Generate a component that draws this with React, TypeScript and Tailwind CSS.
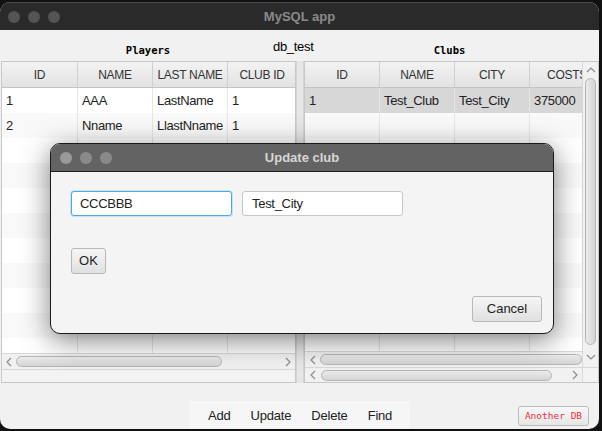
import React from "react";

type Col = { label: string; w: string };

const leftCols: Col[] = [
  { label: "ID", w: "w-[76px]" },
  { label: "NAME", w: "w-[75px]" },
  { label: "LAST NAME", w: "w-[75px]" },
  { label: "CLUB ID", w: "w-[69px]" },
];

const rightCols: Col[] = [
  { label: "ID", w: "w-[75px]" },
  { label: "NAME", w: "w-[75px]" },
  { label: "CITY", w: "w-[75px]" },
  { label: "COSTS", w: "w-[75px]" },
];

const players = [
  ["1", "AAA", "LastName", "1"],
  ["2", "Nname", "LlastNname", "1"],
];

const clubs = [["1", "Test_Club", "Test_City", "375000"]];

function Chevron({ dir }: { dir: "left" | "right" | "up" | "down" }) {
  const d =
    dir === "left"
      ? "M6 1 L2 5 L6 9"
      : dir === "right"
      ? "M2 1 L6 5 L2 9"
      : dir === "up"
      ? "M1 6 L5 2 L9 6"
      : "M1 3 L5 7 L9 3";
  const box = dir === "left" || dir === "right" ? "0 0 8 10" : "0 0 10 8";
  return (
    <svg
      viewBox={box}
      className={dir === "left" || dir === "right" ? "w-[8px] h-[10px]" : "w-[10px] h-[8px]"}
    >
      <path d={d} fill="none" stroke="#8c8c8c" strokeWidth="1.2" />
    </svg>
  );
}

function Thumb({ w }: { w: string }) {
  return (
    <div
      className={`${w} h-[11px] rounded-full border border-[#b4b4b4] bg-gradient-to-b from-[#ececec] to-[#d4d4d4]`}
    />
  );
}

function Table({
  cols,
  rows,
  selected,
}: {
  cols: Col[];
  rows: string[][];
  selected?: number;
}) {
  const lines = Array.from({ length: 11 }, (_, i) => rows[i] ?? ["", "", "", ""]);
  return (
    <div className="flex flex-col flex-1 min-h-0 overflow-hidden">
      {/* header */}
      <div className="flex h-[26px] flex-none border-b border-[#c4c4c4] bg-gradient-to-b from-[#f3f3f3] to-[#e2e2e2]">
        {cols.map((c, i) => (
          <div
            key={i}
            className={`${c.w} flex-none flex items-center justify-center border-r border-[#cfcfcf] text-[12px] text-[#333] tracking-[-0.3px] whitespace-nowrap overflow-hidden`}
          >
            {c.label}
          </div>
        ))}
      </div>
      {/* body */}
      <div className="flex-1 min-h-0 overflow-hidden bg-white">
        {lines.map((r, ri) => (
          <div
            key={ri}
            className={`flex h-[25px] ${
              selected === ri ? "bg-[#d7d7d7]" : ri % 2 === 1 ? "bg-[#f9f9f9]" : "bg-white"
            }`}
          >
            {cols.map((c, ci) => (
              <div
                key={ci}
                className={`${c.w} flex-none flex items-center pl-[4px] border-r border-[#e6e6e6] text-[13px] tracking-[-0.35px] text-[#222] whitespace-nowrap overflow-hidden`}
              >
                {r[ci]}
              </div>
            ))}
          </div>
        ))}
      </div>
    </div>
  );
}

function Dot({ c }: { c: string }) {
  return <div className={`w-[12px] h-[12px] rounded-full ${c}`} />;
}

export default function App() {
  return (
    <div className="relative w-[602px] h-[431px] bg-[#111] overflow-hidden font-['Liberation_Sans',Arial,sans-serif]">
      {/* main window */}
      <div className="mt-[2px] w-[599px] h-[427px] rounded-[10px] overflow-hidden bg-[#f1f1f1] flex flex-col">
        <div className="relative h-[28px] flex-none bg-[#2a2a2a] border-t border-[#4a4a4a] flex items-center">
          <div className="flex gap-[8px] pl-[8px]">
            <Dot c="bg-[#545454]" />
            <Dot c="bg-[#545454]" />
            <Dot c="bg-[#545454]" />
          </div>
          <div className="absolute inset-0 flex items-center justify-center text-[13px] font-bold text-[#8a8a8a]">
            MySQL app
          </div>
        </div>

        {/* titles */}
        <div className="relative h-[31px] flex-none flex font-['DejaVu_Sans_Mono',monospace] text-[10.5px] font-bold text-black">
          <div className="w-[296px] flex justify-center pt-[13px]">Players</div>
          <div className="w-[8px]" />
          <div className="flex-1 flex justify-center pt-[13px] pr-[4px]">Clubs</div>
          <div className="absolute left-[273px] top-[7px] font-['Liberation_Sans',Arial,sans-serif] font-normal text-[13px] tracking-[-0.3px]">
            db_test
          </div>
        </div>

        {/* tables */}
        <div className="h-[322px] flex-none flex pl-[1px]">
          {/* left */}
          <div className="w-[295px] flex flex-col border border-[#c8c8c8] bg-[#f3f3f3]">
            <Table cols={leftCols} rows={players} />
            <div className="h-[16px] flex-none flex items-center bg-[#f1f1f1] border-t border-[#d8d8d8]">
              <div className="w-[14px] flex justify-center">
                <Chevron dir="left" />
              </div>
              <Thumb w="w-[206px]" />
              <div className="flex-1" />
              <div className="w-[14px] flex justify-center">
                <Chevron dir="right" />
              </div>
            </div>
            <div className="h-[13px] flex-none bg-[#f3f3f3] border-t border-[#d8d8d8]" />
          </div>

          {/* splitter */}
          <div className="w-[8px] bg-[#e6e6e6] border-x border-[#d4d4d4]" />

          {/* right */}
          <div className="w-[295px] flex flex-col border border-[#c8c8c8] bg-[#f3f3f3]">
            <div className="flex-1 min-h-0 flex">
              <div className="w-[277px] flex flex-col">
                <Table cols={rightCols} rows={clubs} selected={0} />
                <div className="h-[16px] flex-none flex items-center bg-[#f1f1f1] border-t border-[#d8d8d8] overflow-hidden">
                  <div className="w-[15px] flex-none flex justify-center">
                    <Chevron dir="left" />
                  </div>
                  <Thumb w="w-[262px] flex-none" />
                </div>
              </div>
              <div className="w-[16px] flex flex-col items-center bg-[#f1f1f1] border-l border-[#d8d8d8]">
                <div className="h-[16px] flex items-center">
                  <Chevron dir="up" />
                </div>
                <div className="w-[11px] flex-1 rounded-full border border-[#b4b4b4] bg-gradient-to-r from-[#ececec] to-[#d4d4d4]" />
                <div className="h-[22px] flex items-center">
                  <Chevron dir="down" />
                </div>
              </div>
            </div>
            <div className="h-[15px] flex-none flex items-center bg-[#f1f1f1] border-t border-[#d8d8d8]">
              <div className="w-[16px] flex justify-center">
                <Chevron dir="left" />
              </div>
              <Thumb w="w-[231px]" />
              <div className="flex-1" />
              <div className="w-[14px] flex justify-center">
                <Chevron dir="right" />
              </div>
              <div className="w-[16px] h-full border-l border-[#d8d8d8] bg-[#f3f3f3]" />
            </div>
          </div>
        </div>

        {/* bottom bar */}
        <div className="flex-1 flex items-end">
          <div className="ml-[189px] w-[221px] h-[28px] bg-[#f6f6f6] flex items-center gap-[20px] pl-[19px] pt-[1px] text-[13px] text-[#222] tracking-[-0.2px]">
            <span>Add</span>
            <span>Update</span>
            <span>Delete</span>
            <span>Find</span>
          </div>
          <div className="ml-auto mr-[10px] mb-[3px] w-[71px] h-[20px] rounded-[3px] border border-[#bdbdbd] bg-gradient-to-b from-[#f8f8f8] to-[#e6e6e6] flex items-center justify-center font-['DejaVu_Sans_Mono',monospace] text-[9.5px] text-[#e8323c]">
            Another DB
          </div>
        </div>
      </div>

      {/* dialog */}
      <div className="absolute left-[50px] top-[143px] w-[504px] h-[191px] rounded-[10px] border border-[#1a1a1a] bg-[#f4f4f4] overflow-hidden flex flex-col shadow-[0_6px_28px_rgba(0,0,0,0.5)]">
        <div className="relative h-[28px] flex-none bg-[#636363] border-b border-[#1e1e1e] flex items-center">
          <div className="flex gap-[8px] pl-[9px]">
            <Dot c="bg-[#9a9a9a]" />
            <Dot c="bg-[#8a8a8a]" />
            <Dot c="bg-[#8a8a8a]" />
          </div>
          <div className="absolute inset-0 flex items-center justify-center text-[13px] font-bold text-[#d6d6d6]">
            Update club
          </div>
        </div>
        <div className="flex-1 flex flex-col px-[20px] pt-[19px] pb-[11px]">
          <div className="flex gap-[10px]">
            <div className="w-[161px] h-[25px] rounded-[3px] border-[1.5px] border-[#4fa9dd] bg-white shadow-[0_0_0_1px_rgba(120,190,235,0.35)] flex items-center pl-[8px] text-[13px] tracking-[-0.3px] text-[#222]">
              CCCBBB
            </div>
            <div className="w-[161px] h-[25px] rounded-[3px] border border-[#c6c6c6] bg-white flex items-center pl-[9px] text-[13px] tracking-[-0.3px] text-[#222]">
              Test_City
            </div>
          </div>
          <div className="mt-[32px] w-[35px] h-[26px] rounded-[3px] border border-[#b8b8b8] bg-gradient-to-b from-[#f6f6f6] to-[#e0e0e0] flex items-center justify-center text-[13px] text-[#222]">
            OK
          </div>
          <div className="mt-auto self-end mr-[-9px] w-[70px] h-[26px] rounded-[3px] border border-[#b8b8b8] bg-gradient-to-b from-[#f6f6f6] to-[#e0e0e0] flex items-center justify-center text-[13px] text-[#222]">
            Cancel
          </div>
        </div>
      </div>
    </div>
  );
}
